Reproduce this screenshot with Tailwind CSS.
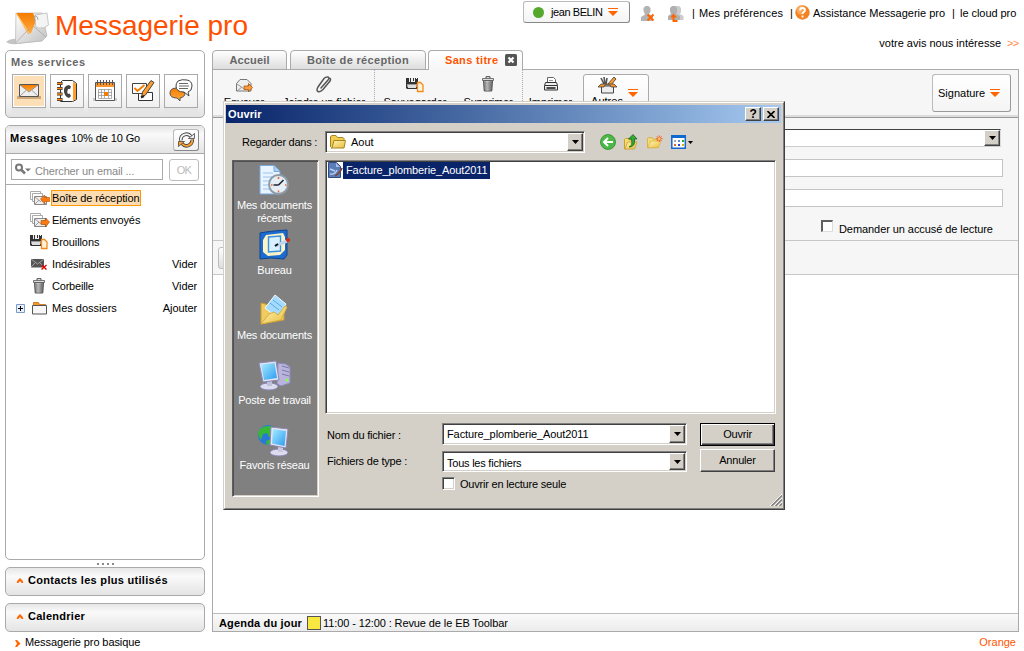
<!DOCTYPE html>
<html lang="fr">
<head>
<meta charset="utf-8">
<title>Messagerie pro</title>
<script src="https://cdn.jsdelivr.net/npm/@tailwindcss/browser@4"></script>
</head>
<body class="bg-white">
<svg width="0" height="0" class="absolute">
  <defs>
    <linearGradient id="or" x1="0" y1="0" x2="0" y2="1"><stop offset="0" stop-color="#f57c00"/><stop offset="1" stop-color="#ffab40"/></linearGradient>
    <linearGradient id="gr" x1="0" y1="0" x2="1" y2="1"><stop offset="0" stop-color="#fff"/><stop offset="1" stop-color="#c0c0c0"/></linearGradient>
    <linearGradient id="ye" x1="0" y1="0" x2="1" y2="1"><stop offset="0" stop-color="#fff6b8"/><stop offset="1" stop-color="#e8bc3c"/></linearGradient>
    <linearGradient id="bl" x1="0" y1="0" x2="1" y2="1"><stop offset="0" stop-color="#a8ecff"/><stop offset="1" stop-color="#2b9cf0"/></linearGradient>
    <linearGradient id="metal" x1="0" y1="0" x2="1" y2="0"><stop offset="0" stop-color="#777"/><stop offset=".4" stop-color="#eee"/><stop offset="1" stop-color="#666"/></linearGradient>
    <symbol id="down" viewBox="0 0 10 8"><path d="M0 0h10v1H0zM0 3h10L5 8z" fill="#ff6600"/></symbol>
    <symbol id="tri" viewBox="0 0 7 4"><path d="M0 0h7L3.500 4z" fill="#000"/></symbol>
    <symbol id="disk" viewBox="0 0 18 16"><path d="M0 1h12v11H1l-1-1z" fill="#333"/><path d="M3 1h1v4H3zM5 1h4v4H5zM10 1h1v1h-1z" fill="#eee"/><path d="M7 1h1v3H7z" fill="#333"/><path d="M1 7h10v3H1z" fill="#999"/><path d="M2 8h8v3H2z" fill="#ddd"/><path d="M11.500 5.500h3l2.500 2.500v6.500h-5.500z" fill="#fff3dc" stroke="#f58a1c" stroke-width="1.300"/></symbol>
    <symbol id="bin" viewBox="0 0 14 16"><path d="M2.500 4.500h9l-.7 10.500H3.200z" fill="url(#metal)" stroke="#444" stroke-width=".9"/><path d="M5 5.500v8.500M7 5.500v8.500M9 5.500v8.500" stroke="#555" stroke-width=".7"/><path d="M1.500 2.500h11v2h-11z" fill="#ddd" stroke="#555" stroke-width=".8"/><path d="M5 2V.7h4V2" fill="none" stroke="#444"/></symbol>
    <symbol id="mails" viewBox="0 0 20 16"><path d="M.5 1.500h10v8h-10z" fill="#fff" stroke="#aaa"/><path d="M2.500 3.500h10v8h-10z" fill="#fff" stroke="#aaa"/><path d="M4.500 6.500h12v8h-12z" fill="#eee" stroke="#888"/><path d="M5 7l5.500 4.500L16 7M5 14l4-4m3 0l4 4" fill="none" stroke="#888" stroke-width=".8"/></symbol>
    <symbol id="upch" viewBox="0 0 8 6"><path d="M0 6l1-3 3-3 3 3 1 3H6L4 3.500 2 6z" fill="#ff6600"/></symbol>
  </defs>
</svg>
<div class="relative flex h-[651px] w-[1024px] flex-col overflow-hidden bg-white font-['Liberation_Sans',sans-serif] text-[11px] leading-[14px] text-black">

  <!-- Header -->
  <header class="flex h-[50px] shrink-0 justify-between pl-[6px]">
    <div class="flex">
      <svg class="mt-[11px] h-[34px] w-[43px]" viewBox="0 0 43 34"><path d="M0 31Q5 27 12 28l25 2-26 3Q4 34 0 31z" fill="#c4c4c4"/><path d="M10 2l26 0 5 23-5 5-26.500 2.500z" fill="url(#gr)" stroke="#bbb" stroke-width=".8"/><path d="M10 2h17l3 8-5 12-3 1z" fill="url(#or)"/><path d="M10 2l13 20" stroke="#ffd27a"/><path d="M9.500 32L24 17M27 15l13 11" fill="none" stroke="#aaa" stroke-width=".8"/><path d="M29 4l12-2 1.500 12q-4 4-10 3-3 0-3-3z" fill="#f4f4f4" stroke="#bbb" stroke-width=".8"/><path d="M32 9q0-4-2.500-4t-1 5" fill="none" stroke="#999" stroke-width=".8"/></svg>
      <h1 class="mt-[10px] ml-[6px] whitespace-nowrap text-[28px] leading-[32px] text-[#ff4f00]">Messagerie pro</h1>
    </div>
    <div class="flex w-[501px] flex-col whitespace-nowrap">
      <div class="flex h-[23px] items-start">
        <div class="mt-px flex h-[22px] w-[107px] items-center rounded-[3px] border border-[#bbb] border-r-[#888] border-b-[#888] bg-linear-to-b from-white to-[#f4f4f4] pl-[9px]">
          <span class="h-[11px] w-[11px] rounded-full bg-[#55a82c]"></span>
          <span class="ml-[7px] w-[51px] tracking-[-0.42px]">jean BELIN</span>
          <svg class="ml-[6px] h-[8px] w-[10px]"><use href="#down"/></svg>
        </div>
        <svg class="mt-[6px] ml-[11px] h-[16px] w-[16px]" viewBox="0 0 16 16"><path d="M4.500 0h3l2 2v3.500L8 8l4 2v5H0v-4l4-2.500L2.500 5V2z" fill="#b4b4b4"/><path d="M6.500 8.500l6 6m0-6l-6 6" stroke="#ff6600" stroke-width="2"/></svg>
        <svg class="mt-[6px] ml-[11px] h-[16px] w-[16px]" viewBox="0 0 16 16"><path d="M7 0h4l2 2v4l-1 2 3.500 2v4H7z" fill="#ccc"/><path d="M4 0h3l2 2v4L8 8l4 2v4H0v-4l3-2-1-3V2z" fill="#b0b0b0"/><path d="M5.500 7.500L9 11.500H6.500V14h3v2h-5v-4.500H2z" fill="#ff6600"/></svg>
        <div class="mt-[6px] ml-[8px] flex">
          <span class="w-[7px]">|</span><span class="w-[91px] tracking-[0.14px]">Mes préférences</span><span class="w-[5px]">|</span>
          <svg class="-mt-[1px] h-[15px] w-[15px]" viewBox="0 0 15 15"><circle cx="7.500" cy="7.500" r="7.200" fill="#f58220"/><circle cx="6" cy="5" r="4.500" fill="#f9a85c"/><path d="M5 5.500Q5 3 7.500 3T10 5.300C10 7 7.500 7 7.500 9M7.500 10.500v2" fill="none" stroke="#fff" stroke-width="1.800"/></svg>
          <span class="ml-[3px] w-[139px]">Assistance Messagerie pro</span><span class="w-[8px]">|</span><span class="tracking-[-0.05px]">le cloud pro</span>
        </div>
      </div>
      <div class="mt-[13px] flex justify-end pr-[5px]"><span>votre avis nous intéresse</span><span class="ml-[6px] w-[12px] tracking-[-0.6px] text-[#ff8a4a]">&gt;&gt;</span></div>
    </div>
  </header>

  <div class="flex h-[582px] shrink-0 gap-[7px] pl-[5px]">
    <!-- Sidebar -->
    <aside class="flex w-[200px] shrink-0 flex-col">
      <section class="h-[68px] rounded-[5px] border border-[#aaa] bg-linear-to-b from-white from-60% to-[#e2e2e2] pt-[4px] pl-[6px]">
        <h2 class="-ml-px font-bold tracking-[0.5px] text-[#666]">Mes services</h2>
        <div class="mt-[5px] flex gap-[4px]">
          <div class="h-[39px] w-[34px] bg-linear-to-b from-[#ccc] to-[#ddd]/20"><div class="flex h-[34px] items-center justify-center border border-[#aaa] bg-[#fcdfb6] outline-1 -outline-offset-2 outline-white">
            <svg class="h-[20px] w-[24px]" viewBox="0 0 24 20"><path d="M0 15h24v3H0z" fill="#cfa97a"/><path d="M2.500 3.500h19v12h-19z" fill="#eee" stroke="#555"/><path d="M3 4h18L12 11z" fill="url(#or)"/><path d="M3 15l6-5.500m6 0l6 5.500M3 4l9 7 9-7" fill="none" stroke="#888" stroke-width=".8"/></svg></div></div>
          <div class="h-[39px] w-[34px] bg-linear-to-b from-[#ccc] to-[#ddd]/20"><div class="flex h-[34px] items-center justify-center border border-[#aaa] bg-linear-to-b from-white to-[#f0f0f0]">
            <svg class="h-[24px] w-[24px]" viewBox="0 0 24 24"><path d="M5.500 3.500l2-2h10l4 3v16l-4 2h-12z" fill="#fff" stroke="#333"/><path d="M18 3l3 2v15l-3 2z" fill="#ff9c2e"/><path d="M14 6q-6 1-5 7 1 5 5 6l2-2-1.500-2.500-1.500.5q-1.500-2 0-5l2 0 1-2.500z" fill="#444"/><path d="M2 4.500h5.500M2 9.500h5.500M2 15h5.500M2 20.500h5.500" stroke="#333" stroke-width="3"/><path d="M2 4.500h5M2 9.500h5M2 15h5M2 20.500h5" stroke="#ff8c1a" stroke-width="1.500"/></svg></div></div>
          <div class="h-[39px] w-[34px] bg-linear-to-b from-[#ccc] to-[#ddd]/20"><div class="flex h-[34px] items-center justify-center border border-[#aaa] bg-linear-to-b from-white to-[#f0f0f0]">
            <svg class="h-[24px] w-[24px]" viewBox="0 0 24 24"><path d="M0 19h24v3H0z" fill="#ccc"/><path d="M2.500 3.500h19v18h-19z" fill="#fff" stroke="#555"/><path d="M3 4h18v4H3z" fill="#f9952a"/><path d="M4.500 1v5M7.500 1v5M10.500 1v5M13.500 1v5M16.500 1v5M19.500 1v5" stroke="#555"/><path d="M5.500 10.500h13v9h-13zM5 13.500h14M5 16.500h14M8.500 10v9M11.500 10v9M15.500 10v9" fill="none" stroke="#999" stroke-width=".8"/><path d="M11 13h4v4h-4z" fill="#f57c00"/></svg></div></div>
          <div class="h-[39px] w-[34px] bg-linear-to-b from-[#ccc] to-[#ddd]/20"><div class="flex h-[34px] items-center justify-center border border-[#aaa] bg-linear-to-b from-white to-[#f0f0f0]">
            <svg class="h-[24px] w-[24px]" viewBox="0 0 24 24"><path d="M7.500 13.500h14v8h-14z" fill="#fff" stroke="#333"/><path d="M1.500 4.500h14v10h-14z" fill="#fff" stroke="#444"/><path d="M3.500 9l3 3 7-6" fill="none" stroke="#f57c00" stroke-width="2"/><path d="M10.500 18l1-5L20 1.500l3 2-8.500 12.500z" fill="#ff9c2e" stroke="#444"/><path d="M10 18.500l3-1.500" stroke="#222" stroke-width="2"/></svg></div></div>
          <div class="h-[39px] w-[34px] bg-linear-to-b from-[#ccc] to-[#ddd]/20"><div class="flex h-[34px] items-center justify-center border border-[#aaa] bg-linear-to-b from-white to-[#f0f0f0]">
            <svg class="h-[24px] w-[24px]" viewBox="0 0 24 24"><path d="M8 9q-7 0-7 5t7 5l3 3v-3q5-1 5-5z" fill="url(#or)" stroke="#555"/><path d="M9 2q4-2 9-1 5 1 5 6t-4 6l1 4-5-4q-8 0-8-6 0-3 2-5z" fill="#fff" stroke="#444"/><path d="M10 4.500h9M10 7h10M10 9.500h9" stroke="#666"/></svg></div></div>
        </div>
      </section>

      <section class="mt-[7px] flex h-[435px] flex-col rounded-[5px] border border-[#aaa] bg-white">
        <div class="flex h-[28px] shrink-0 items-center rounded-t-[4px] border-b border-[#aaa] bg-linear-to-b from-[#e4e4e4] via-[#fafafa] via-30% to-[#e4e4e4] pl-[4px]">
          <span class="-mt-[3px] w-[61px] font-bold tracking-[0.6px]">Messages</span><span class="-mt-[3px] w-[102px] tracking-[-0.1px]">10% de 10 Go</span>
          <span class="flex h-[22px] w-[26px] items-center justify-center rounded-[3px] border border-[#bbb] border-r-[#888] border-b-[#888] bg-linear-to-b from-white to-[#f0f0f0]">
            <svg class="h-[16px] w-[17px]" viewBox="0 0 17 16"><g fill="none" stroke="#444" stroke-width="3.600"><path d="M2.800 8.500A5.700 5.700 0 0 1 13 4.500"/><path d="M14.200 7.500A5.700 5.700 0 0 1 4 11.500"/></g><path d="M2.800 8.500A5.700 5.700 0 0 1 13 4.500" fill="none" stroke="#f4f4f4" stroke-width="1.800"/><path d="M14.200 7.500A5.700 5.700 0 0 1 4 11.500" fill="none" stroke="#ffa030" stroke-width="1.800"/><path d="M10.500 6.500h6v-5z" fill="#eee" stroke="#444" stroke-width=".8"/><path d="M6.500 9.500h-6v5z" fill="#ffa030" stroke="#444" stroke-width=".8"/></svg>
          </span>
        </div>
        <div class="flex h-[31px] shrink-0 items-start border-b border-[#aaa] pt-[5px] pl-[5px]">
          <div class="flex h-[21px] w-[152px] items-center border border-[#aaa] pl-[3px]">
            <svg class="-mt-[2px] h-[12px] w-[16px]" viewBox="0 0 16 12"><circle cx="4" cy="4.500" r="3" fill="none" stroke="#777" stroke-width="2"/><path d="M6.500 7l3.500 3.500" stroke="#777" stroke-width="2.500"/><path d="M10 5.500h6l-3 3z" fill="#777"/></svg>
            <span class="mt-[3px] ml-[4px] tracking-[-0.14px] text-[#888]">Chercher un email ...</span>
          </div>
          <span class="ml-[6px] flex h-[22px] w-[30px] items-center justify-center rounded-[3px] border border-[#bbb] tracking-[-0.8px] text-[#bbb]">OK</span>
        </div>
        <ul class="flex flex-col pt-[2px] tracking-[-0.1px]">
          <li class="flex h-[22px] items-center pl-[24px]"><svg class="mr-[2px] h-[16px] w-[20px]" viewBox="0 0 20 16"><use href="#mails"/><path d="M10.500 9l4-4v2.500h5v4h-5V14z" fill="#ff7a10" stroke="#b85000" stroke-width=".6"/></svg><span class="-ml-[1px] h-[16px] w-[90px] border border-[#f90] bg-[#fcdcb0] whitespace-nowrap">Boîte de réception</span></li>
          <li class="flex h-[22px] items-center pl-[24px]"><svg class="mr-[2px] h-[16px] w-[20px]" viewBox="0 0 20 16"><use href="#mails"/><path d="M19.500 10l-4-4v2.500H11v4h4.500V15z" fill="#ff7a10" stroke="#a04800" stroke-width=".6"/></svg><span>Eléments envoyés</span></li>
          <li class="flex h-[22px] items-center pl-[24px]"><svg class="mr-[4px] h-[16px] w-[18px]"><use href="#disk"/></svg><span>Brouillons</span></li>
          <li class="flex h-[22px] items-center pr-[7px] pl-[25px]"><svg class="mr-[4px] h-[12px] w-[17px]" viewBox="0 0 17 12"><path d="M0 1h13v8.500H0z" fill="#555"/><path d="M0 1l6.500 5L13 1M0 9l4.500-4.500M13 9L8.500 4.500" fill="none" stroke="#aaa" stroke-width=".9"/><path d="M10.500 7l5 4.500m0-4.500l-5 4.500" stroke="#e00000" stroke-width="1.400"/></svg><span class="grow">Indésirables</span><span>Vider</span></li>
          <li class="flex h-[22px] items-center pr-[7px] pl-[26px]"><svg class="mr-[6px] h-[16px] w-[14px]"><use href="#bin"/></svg><span class="grow tracking-[-0.2px]">Corbeille</span><span>Vider</span></li>
          <li class="flex h-[22px] items-center pr-[7px] pl-[10px]"><svg class="mr-[7px] h-[9px] w-[9px]" viewBox="0 0 9 9"><path d="M.5.5h8v8h-8z" fill="#eaf0fb" stroke="#7b9ac8"/><path d="M2 4.500h5M4.500 2v5" stroke="#000"/></svg><svg class="mr-[5px] h-[14px] w-[15px]" viewBox="0 0 15 14"><path d="M1.500 4.500V1.500h5l1 2h6v1.500" fill="#f9952a" stroke="#c86a10" stroke-width=".8"/><path d="M.5 4.500h14v8.500H.5z" fill="#f7f7f7" stroke="#555"/></svg><span class="grow tracking-normal">Mes dossiers</span><span>Ajouter</span></li>
        </ul>
      </section>

      <div class="flex h-[7px] shrink-0 items-center justify-center gap-[3px]"><i class="h-[2px] w-[2px] bg-[#888]"></i><i class="h-[2px] w-[2px] bg-[#888]"></i><i class="h-[2px] w-[2px] bg-[#888]"></i><i class="h-[2px] w-[2px] bg-[#888]"></i></div>
      <div class="flex h-[29px] shrink-0 items-center rounded-[5px] border border-[#aaa] bg-linear-to-b from-[#e6e6e6] via-[#fafafa] via-30% to-[#e4e4e4] pb-[3px] pl-[10px]"><svg class="mr-[4px] h-[5px] w-[8px]"><use href="#upch"/></svg><b class="tracking-[0.3px]">Contacts les plus utilisés</b></div>
      <div class="mt-[7px] flex h-[29px] shrink-0 items-center rounded-[5px] border border-[#aaa] bg-linear-to-b from-[#e6e6e6] via-[#fafafa] via-30% to-[#e4e4e4] pb-[3px] pl-[10px]"><svg class="mr-[4px] h-[5px] w-[8px]"><use href="#upch"/></svg><b class="tracking-[0.27px]">Calendrier</b></div>
    </aside>

    <!-- Main panel -->
    <main class="flex w-[807px] shrink-0 flex-col whitespace-nowrap">
      <nav class="z-10 -mb-px flex h-[20px] shrink-0 font-bold tracking-[0.33px] text-[#666]">
        <div class="flex w-[75px] items-center justify-center rounded-t-[4px] border border-[#aaa] bg-linear-to-b from-white to-[#ddd] tracking-[0.15px]">Accueil</div>
        <div class="ml-[3px] flex w-[136px] items-center justify-center rounded-t-[4px] border border-[#aaa] bg-linear-to-b from-white to-[#ddd]">Boîte de réception</div>
        <div class="ml-[2px] flex w-[95px] items-center rounded-t-[4px] border border-b-0 border-[#aaa] bg-linear-to-b from-white to-[#f6f6f6] pb-px pl-[16px] text-[#ff5500]"><span class="w-[60px]">Sans titre</span><svg class="h-[12px] w-[12px]" viewBox="0 0 12 12"><rect width="12" height="12" rx="1.500" fill="#555"/><path d="M3.500 3.500l5 5m0-5l-5 5" stroke="#fff" stroke-width="2.200"/></svg></div>
      </nav>
      <div class="flex grow flex-col border border-[#aaa]">
        <div class="flex h-[48px] shrink-0 border-b border-[#999] bg-[#f6f6f6] shadow-[inset_0_-2px_0_#ddd]">
          <div class="flex w-[62px] flex-col items-center pt-[8px]"><svg class="h-[15px] w-[17px]" viewBox="0 0 17 15"><path d="M.5 5.500L4 1.500h7l4 4v7.500H.5z" fill="#eee" stroke="#777"/><path d="M1 6l6.500 4.500L14.500 6M1 13l5-4" fill="none" stroke="#999"/><path d="M16.500 9.500l-4-4V8H8v3.500h4.500V14z" fill="#ff9a40" stroke="#a04800" stroke-width=".7"/></svg><span class="mt-[2px]">Envoyer</span></div>
          <div class="flex w-[98px] flex-col items-center pt-[6px]"><svg class="h-[17px] w-[16px]" viewBox="0 0 16 17"><g fill="none" stroke-linecap="round"><path d="M5 12L12 4q2-2.500 0-3t-4 1.500L2 11q-2 3.500 0 4.500t5-2l7-8.500q1-2 0-2.500" stroke="#555" stroke-width="1.500"/></g></svg><span class="mt-[2px] tracking-[-0.1px]">Joindre un fichier</span></div>
          <div class="ml-px flex w-[81px] flex-col items-center border-l border-dotted border-[#aaa] pt-[7px]"><svg class="h-[16px] w-[18px]"><use href="#disk"/></svg><span class="mt-[2px]">Sauvegarder</span></div>
          <div class="flex w-[66px] flex-col items-center pt-[6px]"><svg class="h-[16px] w-[14px]"><use href="#bin"/></svg><span class="mt-[3px] tracking-[-0.2px]">Supprimer</span></div>
          <div class="ml-px flex w-[56px] flex-col items-center border-l border-dotted border-[#aaa] pt-[6px]"><svg class="h-[16px] w-[14px]" viewBox="0 0 14 16"><path d="M3.500 7V1.500h6l2 2V7z" fill="#fff" stroke="#666"/><path d="M5 4.500h4" stroke="#999"/><path d="M1.500 6.500h11l1 3V14H.5V9.500z" fill="#eee" stroke="#333"/><path d="M1 9.500h12" stroke="#333"/><path d="M2.500 12h9" stroke="#222" stroke-width="1.600"/></svg><span class="mt-[3px]">Imprimer</span></div>
          <div class="mt-[4px] ml-[5px] flex h-[38px] w-[66px] rounded-[3px] border border-[#aaa] bg-linear-to-b from-white to-[#f4f4f4] pl-[7px]">
            <div class="flex w-[32px] flex-col items-center"><svg class="mt-[1px] h-[18px] w-[19px]" viewBox="0 0 19 18"><path d="M3 2l3 6M6 1l1 7M9 2L8 8" stroke="#555" stroke-width="1.600"/><path d="M10 8l6-7 2 2-5 6z" fill="#ff9c2e" stroke="#333" stroke-width=".8"/><path d="M3.500 10h12v7h-12z" fill="#eee" stroke="#444"/><path d="M0 11l3-3h13l3 3h-6l-1-2H7l-1 2z" fill="#f9952a" stroke="#444" stroke-width=".8"/></svg><span>Autres</span></div>
            <svg class="mt-[14px] ml-[5px] h-[8px] w-[10px]"><use href="#down"/></svg>
          </div>
          <div class="mt-[4px] ml-[283px] flex h-[38px] w-[79px] items-center rounded-[3px] border border-[#bbb] border-r-[#999] border-b-[#999] bg-linear-to-b from-white to-[#f4f4f4] pl-[5px]"><span class="w-[52px]">Signature</span><svg class="h-[8px] w-[10px]"><use href="#down"/></svg></div>
        </div>
        <div class="flex h-[123px] shrink-0 flex-col border-b border-[#c8c8c8] bg-[#f6f6f6] pt-[11px] pl-[80px]">
          <div class="flex h-[18px] w-[708px] justify-end border border-[#404040] border-r-[#ddd] border-b-[#ccc] bg-white"><span class="flex w-[16px] items-center justify-center border border-white border-r-[#404040] border-b-[#404040] bg-[#d4d0c8] shadow-[inset_-1px_-1px_0_#808080]"><svg class="h-[4px] w-[7px]"><use href="#tri"/></svg></span></div>
          <div class="mt-[12px] h-[18px] w-[710px] border border-[#c4c4c4] bg-white"></div>
          <div class="mt-[12px] h-[18px] w-[710px] border border-[#c4c4c4] bg-white"></div>
          <div class="mt-[13px] flex pl-[528px]"><span class="h-[12px] w-[12px] border-t-2 border-r border-b border-l-2 border-[#606060] border-r-[#ddd] border-b-[#ddd] bg-white"></span><span class="mt-[2px] ml-[6px] tracking-[-0.07px]">Demander un accusé de lecture</span></div>
        </div>
        <div class="h-[34px] shrink-0 border-b border-[#c8c8c8] bg-[#f6f6f6] pt-[6px] pl-[5px]"><div class="h-[22px] w-[60px] rounded-[3px] border border-[#bbb] bg-linear-to-b from-white to-[#ddd]"></div></div>
        <div class="grow bg-white"></div>
        <div class="flex h-[18px] shrink-0 items-center border-t border-[#bbb] bg-linear-to-b from-[#fafafa] to-[#ececec] pl-[6px]"><b class="w-[88px] tracking-[0.17px]">Agenda du jour</b><span class="h-[14px] w-[14px] border border-[#555] bg-[#f8e840]"></span><span class="ml-[2px] tracking-[-0.1px]">11:00 - 12:00 : Revue de le EB Toolbar</span></div>
      </div>
    </main>
  </div>

  <footer class="flex items-center justify-between pt-[3px] pr-[8px] pl-[15px]">
    <div class="flex items-center"><svg class="mt-[2px] mr-[4px] h-[7px] w-[6px]" viewBox="0 0 6 7"><path d="M0 0h2l3.500 3.500L2 7H0l2-3.500z" fill="#ff6600"/></svg><span class="tracking-[-0.1px]">Messagerie pro basique</span></div>
    <span class="text-[#ff5500]">Orange</span>
  </footer>

  <!-- File dialog -->
  <div class="absolute top-[101px] left-[223px] z-20 flex h-[409px] w-[562px] flex-col border border-[#d4d0c8] border-r-[#404040] border-b-[#404040] bg-[#d4d0c8] tracking-[-0.2px] whitespace-nowrap">
    <div class="flex grow flex-col border border-white border-r-[#808080] border-b-[#808080] p-[1px]">
      <div class="mt-px mr-px flex h-[18px] shrink-0 items-center bg-linear-to-r from-[#0a246a] to-[#a6caf0] pr-[2px] pl-[2px]">
        <b class="grow tracking-[0.1px] text-white">Ouvrir</b>
        <span class="flex h-[14px] w-[16px] items-center justify-center border border-white border-r-[#404040] border-b-[#404040] bg-[#d4d0c8] text-[12px] font-bold shadow-[inset_-1px_-1px_0_#808080]">?</span>
        <span class="ml-[2px] flex h-[14px] w-[16px] items-center justify-center border border-white border-r-[#404040] border-b-[#404040] bg-[#d4d0c8] shadow-[inset_-1px_-1px_0_#808080]"><svg class="h-[7px] w-[8px]" viewBox="0 0 8 7"><path d="M.5 0l7 7m0-7l-7 7" stroke="#000" stroke-width="1.600"/></svg></span>
      </div>
      <div class="mt-[8px] flex h-[22px] shrink-0 items-center pl-[16px]">
        <span class="w-[83px] tracking-[-0.26px]">Regarder dans :</span>
        <div class="flex h-[22px] w-[260px] items-center border border-[#808080] border-r-white border-b-white bg-white shadow-[inset_1px_1px_0_#404040,inset_-1px_-1px_0_#d4d0c8]">
          <svg class="ml-[4px] h-[14px] w-[16px]" viewBox="0 0 16 14"><path d="M.5 12V1.500L2 .5h4l1.500 2H13l1 1V6" fill="#f0cc50" stroke="#a88420"/><path d="M2 13L4 5.500h11.500L14 13H1z" fill="url(#ye)" stroke="#a88420"/></svg>
          <span class="ml-[5px] grow tracking-normal">Aout</span>
          <span class="mr-[1px] flex h-[18px] w-[16px] items-center justify-center border border-white border-r-[#404040] border-b-[#404040] bg-[#d4d0c8] shadow-[inset_-1px_-1px_0_#808080]"><svg class="h-[4px] w-[7px]"><use href="#tri"/></svg></span>
        </div>
        <svg class="ml-[15px] h-[16px] w-[16px]" viewBox="0 0 16 16"><circle cx="8" cy="8" r="7.500" fill="#4db848" stroke="#2c8c2c" stroke-width=".8"/><path d="M13 8H4m4-4L4 8l4 4" fill="none" stroke="#fff" stroke-width="2"/></svg>
        <svg class="ml-[8px] h-[16px] w-[14px]" viewBox="0 0 14 16"><path d="M.5 15V5.500l1-1h3l1 1.500h5V14z" fill="#f4dc78" stroke="#c8a030"/><path d="M1 15L3.500 8H13L10.500 15z" fill="url(#ye)" stroke="#c8a030" stroke-width=".8"/><path d="M5 13q4-1 2.500-8H4.500L9 .5l4 4.500h-2.500q1 8-5.500 8z" fill="#38a838" stroke="#116a11" stroke-width=".8"/></svg>
        <svg class="ml-[9px] h-[14px] w-[16px]" viewBox="0 0 17 14"><path d="M.5 13V3.500l1-1h4l1 1.500H11V13z" fill="#f4dc78" stroke="#d8b040"/><path d="M1 13L4 6h11l-3 7z" fill="url(#ye)" stroke="#d8b040" stroke-width=".8"/><path d="M13 0v7M9.500 3.500h7M10.500 1l5 5m0-5l-5 5" stroke="#f05020"/><circle cx="13" cy="3.500" r="1.300" fill="#ffd060"/></svg>
        <svg class="ml-[8px] h-[14px] w-[22px]" viewBox="0 0 22 14"><path d="M.8.8h13.500v12.500H.8z" fill="#fff" stroke="#1068d0" stroke-width="1.500"/><path d="M0 0h15v3H0z" fill="#1068d0"/><path d="M3 5h2v2H3z" fill="#aab"/><path d="M7 5h2v2H7z" fill="#68c"/><path d="M11 5h2v2h-2z" fill="#2a2"/><path d="M3 9h2v2H3z" fill="#e63"/><path d="M7 9h2v2H7z" fill="#24c"/><path d="M11 9h2v2h-2z" fill="#da2"/><path d="M17 6h5l-2.500 3z" fill="#000"/></svg>
      </div>
      <div class="flex shrink-0 pl-[6px]">
        <div class="mt-[7px] flex h-[337px] w-[87px] flex-col items-center border border-[#606060] border-r-white border-b-white bg-[#808080] pt-[3px] pr-[2px] text-center leading-[13px] text-white shadow-[inset_1px_1px_0_#505050,inset_-1px_-1px_0_#d4d0c8]">
          <div class="flex h-[65px] shrink-0 flex-col items-center"><svg class="mb-px h-[34px] w-[32px]" viewBox="0 0 32 34"><path d="M2 1.500h14l6 6V30H2z" fill="#e8f4ff" stroke="#78a8e0"/><path d="M16 1.500v6h6" fill="#a8d0f8" stroke="#78a8e0"/><path d="M5 9h10M5 13h9M5 17h6M5 21h5M5 25h6" stroke="#98c4f0"/><circle cx="20.500" cy="20.500" r="9.500" fill="#e4eef4" stroke="#8c9ca8" stroke-width="2"/><path d="M20.500 21l5-5M20.500 21h-5" stroke="#223" stroke-width="1.600"/><path d="M20.500 13v2M20.500 26.500v2M13 21h1.500M27 21h1.500" stroke="#f06030" stroke-width="1.500"/></svg><p>Mes documents<br>récents</p></div>
          <div class="flex h-[65px] shrink-0 flex-col items-center"><svg class="mb-[2px] h-[33px] w-[33px]" viewBox="0 0 33 33"><path d="M2 4q10-2 27-3v25l-3 4Q12 28 2 30z" fill="#1c6cd0" stroke="#0c4494"/><path d="M8 6l17-2 2 4v13l-5 5-12 1-5-4V11z" fill="#fdf3c4"/><path d="M10.500 8l12-1v15l-12 1z" fill="#d8f0ff" stroke="#3c90e0" stroke-width="1.400"/><path d="M17 17l12-5" stroke="#c0d4ec" stroke-width="3"/><path d="M17 17l3-2" stroke="#111" stroke-width="2"/><circle cx="30" cy="11" r="2" fill="#d82810"/></svg><p>Bureau</p></div>
          <div class="flex h-[65px] shrink-0 flex-col items-center"><svg class="mb-[2px] h-[33px] w-[32px]" viewBox="0 0 32 33"><path d="M3 30V9l8 2 1 4 14-2v13z" fill="#f0cc60" stroke="#c89c30"/><path d="M17 1l11 9-8 14-13-10z" fill="#a4dcff" stroke="#f4faff"/><path d="M12 9l9 7M15 6l9 7" stroke="#5ca8e4"/><path d="M3 30l8-10 5-2 4 3 7-9 2 1-6 13z" fill="url(#ye)" stroke="#d8ac40"/></svg><p>Mes documents</p></div>
          <div class="flex h-[65px] shrink-0 flex-col items-center"><svg class="mb-[2px] h-[33px] w-[33px]" viewBox="0 0 33 33"><path d="M20 4l8 1 4 3v16l-9 3-4-2z" fill="#b8b4dc" stroke="#8c88b8"/><path d="M24 7l7 2M24 11l7 2M24 15l7 2" stroke="#7c78a8"/><circle cx="29" cy="21" r="1.500" fill="#8f4"/><ellipse cx="11" cy="27.500" rx="9" ry="3.500" fill="#dcdcf0" stroke="#8884b0"/><path d="M9 21h5v6H9z" fill="#c0c0dc"/><path d="M1 4l17-2 3 19-16 2z" fill="#e4e4f4" stroke="#8c88b4"/><path d="M3 5.500L16.500 4l2.500 15L6 21z" fill="url(#bl)"/></svg><p>Poste de travail</p></div>
          <div class="flex h-[65px] shrink-0 flex-col items-center"><svg class="mb-[2px] h-[33px] w-[34px]" viewBox="0 0 34 33"><circle cx="11" cy="11" r="10" fill="#2878d8"/><path d="M3 5q6-5 13-2l-2 5 3 4-5 1-2-4-4 1-2 6q-3-4-3-7zM9 17l5-2-1 5-3 1z" fill="#38b838"/><ellipse cx="22" cy="28.500" rx="9" ry="3.500" fill="#dcdcf0" stroke="#8884b0"/><path d="M21 22h5v6h-5z" fill="#c8c8e0"/><path d="M14 3l17 2-2 19-16-3z" fill="#e4e4f4" stroke="#8c88b4"/><path d="M16 5l13 2-1.500 15L15 19.500z" fill="url(#bl)"/></svg><p>Favoris réseau</p></div>
        </div>
        <div class="mt-[7px] ml-[6px] flex w-[451px] flex-col">
          <div class="h-[254px] border border-[#808080] border-r-white border-b-white bg-white pt-px pl-px shadow-[inset_1px_1px_0_#404040,inset_-1px_-1px_0_#d4d0c8]">
            <div class="flex h-[17px]"><svg class="h-[16px] w-[16px]" viewBox="0 0 16 16"><path d="M1.500.500h8l4 4v11h-12z" fill="#5c7cb8" stroke="#304c84"/><path d="M9 1v4h4" fill="#a8c0e8"/><path d="M3 7l5 2M3 12q5 1 7-4" stroke="#b8d0f0" fill="none" stroke-width="1.400"/><path d="M8 14q5-3 7-8" fill="none" stroke="#7c4c40" stroke-width="1.800"/></svg><span class="h-[17px] w-[147px] bg-[#0a246a] pl-[3px] leading-[17px] tracking-[-0.1px] text-white">Facture_plomberie_Aout2011</span></div>
          </div>
          <div class="mt-[9px] flex">
            <div class="flex w-[117px] flex-col pl-[2px]"><span class="mt-[5px]">Nom du fichier :</span><span class="mt-[12px]">Fichiers de type :</span></div>
            <div class="flex w-[245px] flex-col">
              <div class="flex h-[22px] items-center border border-[#808080] border-r-white border-b-white bg-white pl-[4px] shadow-[inset_1px_1px_0_#404040,inset_-1px_-1px_0_#d4d0c8]"><span class="grow tracking-[-0.1px]">Facture_plomberie_Aout2011</span><span class="mr-px flex h-[18px] w-[16px] items-center justify-center border border-white border-r-[#404040] border-b-[#404040] bg-[#d4d0c8] shadow-[inset_-1px_-1px_0_#808080]"><svg class="h-[4px] w-[7px]"><use href="#tri"/></svg></span></div>
              <div class="mt-[6px] flex h-[21px] items-center border border-[#808080] border-r-white border-b-white bg-white pl-[4px] shadow-[inset_1px_1px_0_#404040,inset_-1px_-1px_0_#d4d0c8]"><span class="grow pt-[2px] tracking-[-0.23px]">Tous les fichiers</span><span class="mr-px flex h-[17px] w-[16px] items-center justify-center border border-white border-r-[#404040] border-b-[#404040] bg-[#d4d0c8] shadow-[inset_-1px_-1px_0_#808080]"><svg class="h-[4px] w-[7px]"><use href="#tri"/></svg></span></div>
              <div class="mt-[5px] flex items-start"><span class="h-[13px] w-[13px] border border-[#808080] border-r-white border-b-white bg-white shadow-[inset_1px_1px_0_#404040,inset_-1px_-1px_0_#d4d0c8]"></span><span class="ml-[5px]">Ouvrir en lecture seule</span></div>
            </div>
            <div class="ml-[13px] flex w-[75px] flex-col">
              <div class="flex h-[23px] items-center justify-center border border-black pb-px shadow-[inset_1px_1px_0_#fff,inset_-1px_-1px_0_#404040,inset_-2px_-2px_0_#808080]">Ouvrir</div>
              <div class="mt-[3px] flex h-[23px] items-center justify-center border border-white border-r-[#404040] border-b-[#404040] pb-px shadow-[inset_-1px_-1px_0_#808080]">Annuler</div>
              <svg class="mt-[22px] ml-[70px] h-[12px] w-[12px]" viewBox="0 0 12 12"><path d="M0 12L12 0M4 12l8-8M8 12l4-4" stroke="#fff"/><path d="M1.500 12L12 1.500M5.500 12L12 5.500M9.500 12L12 9.500" stroke="#808080" stroke-width="1.500"/></svg>
            </div>
          </div>
        </div>
      </div>
    </div>
  </div>
</div>
</body>
</html>
